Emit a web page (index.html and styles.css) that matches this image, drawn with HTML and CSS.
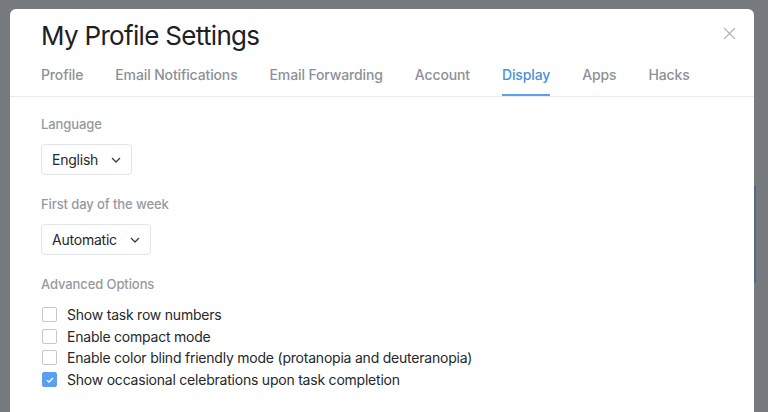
FILE: index.html
```html
<!DOCTYPE html>
<html>
<head>
<meta charset="utf-8">
<link rel="stylesheet" href="styles.css">
</head>
<body>
<div class="page-strip"></div>
<div class="modal">
  <div class="modal-header">
    <h1 class="title">My Profile Settings</h1>
    <button class="close" aria-label="Close">
      <svg width="13" height="13" viewBox="0 0 13 13"><path d="M1 1L12 12M12 1L1 12" stroke="#b4b8bc" stroke-width="1.4" fill="none"/></svg>
    </button>
    <nav class="tabs">
      <span class="tab">Profile</span>
      <span class="tab">Email Notifications</span>
      <span class="tab">Email Forwarding</span>
      <span class="tab">Account</span>
      <span class="tab active">Display</span>
      <span class="tab">Apps</span>
      <span class="tab">Hacks</span>
    </nav>
  </div>
  <div class="modal-body">
    <div class="field">
      <div class="label">Language</div>
      <div class="select"><span>English</span>
        <svg class="chev" width="10" height="6" viewBox="0 0 10 6"><path d="M1 1L5 5L9 1" stroke="#3a3e42" stroke-width="1.3" fill="none"/></svg>
      </div>
    </div>
    <div class="field">
      <div class="label">First day of the week</div>
      <div class="select"><span>Automatic</span>
        <svg class="chev" width="10" height="6" viewBox="0 0 10 6"><path d="M1 1L5 5L9 1" stroke="#3a3e42" stroke-width="1.3" fill="none"/></svg>
      </div>
    </div>
    <div class="field">
      <div class="label">Advanced Options</div>
      <ul class="checks">
        <li><span class="box"></span>Show task row numbers</li>
        <li><span class="box"></span>Enable compact mode</li>
        <li><span class="box"></span>Enable color blind friendly mode (protanopia and deuteranopia)</li>
        <li><span class="box checked"><svg width="10" height="8" viewBox="0 0 10 8"><path d="M2 4.2L4 6L8 2" stroke="#fff" stroke-width="1.3" fill="none"/></svg></span>Show occasional celebrations upon task completion</li>
      </ul>
    </div>
  </div>
</div>
</body>
</html>
```
FILE: styles.css
```css
html, body {
  margin: 0;
  padding: 0;
  height: 100%;
  overflow: hidden;
}
body {
  background: #76797d;
  font-family: Inter, "Liberation Sans", Arial, sans-serif;
  padding: 9px 14px 0 10px;
  box-sizing: border-box;
}
.page-strip {
  position: fixed;
  left: 754px;
  top: 186px;
  width: 2px;
  height: 97px;
  background: #4d6a8c;
}
.modal {
  position: relative;
  background: #fff;
  border-radius: 6px 6px 0 0;
  height: 420px;
}
.modal-header {
  padding: 11px 31px 0;
  border-bottom: 1px solid #e8eaec;
}
.title {
  margin: 0;
  font-size: 26px;
  font-weight: 400;
  line-height: 32px;
  color: #1d2125;
  letter-spacing: -0.68px;
}
.close {
  position: absolute;
  top: 18px;
  right: 18px;
  width: 13px;
  height: 13px;
  padding: 0;
  border: 0;
  background: none;
  display: flex;
}
.tabs {
  display: flex;
  gap: 32px;
  margin-top: 14px;
}
.tab {
  font-size: 14px;
  line-height: 17px;
  color: #8c9197;
  padding-bottom: 11px;
  border-bottom: 2px solid transparent;
  font-weight: 500;
  letter-spacing: -0.13px;
}
.tab.active {
  color: #4a90e2;
  border-bottom-color: #5aa0ee;
}
.modal-body {
  padding: 19px 31px 0;
  letter-spacing: -0.22px;
}
.field {
  margin-bottom: 21px;
}
.label {
  font-size: 13px;
  line-height: 16px;
  font-weight: 500;
  color: #959aa0;
  margin-bottom: 12px;
  letter-spacing: -0.1px;
}
.select {
  display: inline-flex;
  align-items: center;
  gap: 13px;
  height: 31px;
  box-sizing: border-box;
  padding: 0 10px 0 10px;
  border: 1px solid #e2e4e7;
  border-radius: 4px;
  font-size: 14px;
  color: #24282c;
}
.checks {
  list-style: none;
  margin: 0;
  padding: 0;
  margin-top: 12px;
}
.checks li {
  display: flex;
  align-items: center;
  height: 21.6px;
  font-size: 14px;
  color: #24282c;
}
.box {
  width: 13px;
  height: 13px;
  border: 1px solid #c4c7cb;
  border-radius: 2px;
  margin: 0 10px 0 1px;
  box-sizing: content-box;
  display: flex;
  align-items: center;
  justify-content: center;
}
.box.checked {
  background: #5b9ff0;
  border-color: #5b9ff0;
}
```
